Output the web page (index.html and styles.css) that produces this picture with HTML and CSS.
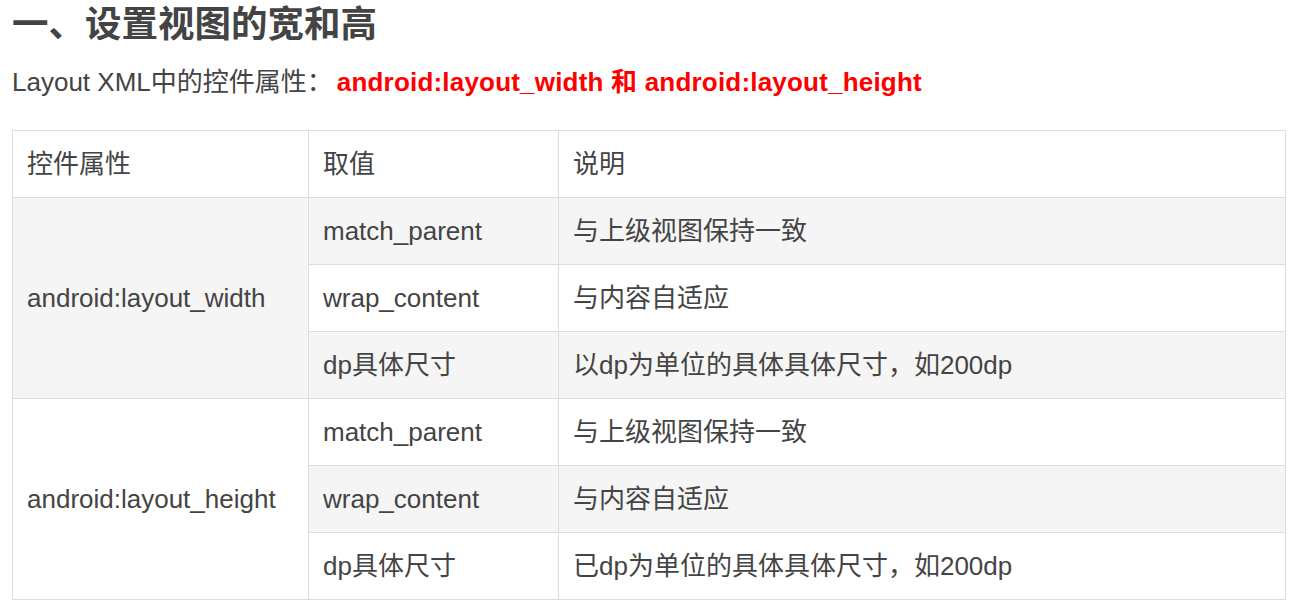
FILE: index.html
```html
<!DOCTYPE html>
<html lang="zh-CN">
<head>
<meta charset="utf-8">
<title>设置视图的宽和高</title>
<link rel="stylesheet" href="styles.css">
</head>
<body>
<div class="article">
  <h2 class="title">一、设置视图的宽和高</h2>
  <p class="intro">Layout XML中的控件属性：<strong class="hl">android:layout_width 和 android:layout_height</strong></p>
  <table class="attr-table">
    <colgroup>
      <col class="c1"><col class="c2"><col class="c3">
    </colgroup>
    <thead>
      <tr><th>控件属性</th><th>取值</th><th>说明</th></tr>
    </thead>
    <tbody>
      <tr><td rowspan="3">android:layout_width</td><td>match_parent</td><td>与上级视图保持一致</td></tr>
      <tr><td>wrap_content</td><td>与内容自适应</td></tr>
      <tr><td>dp具体尺寸</td><td>以dp为单位的具体具体尺寸，如200dp</td></tr>
      <tr><td rowspan="3">android:layout_height</td><td>match_parent</td><td>与上级视图保持一致</td></tr>
      <tr><td>wrap_content</td><td>与内容自适应</td></tr>
      <tr><td>dp具体尺寸</td><td>已dp为单位的具体具体尺寸，如200dp</td></tr>
    </tbody>
  </table>
</div>
</body>
</html>
```

FILE: styles.css
```css
html, body {
  margin: 0;
  padding: 0;
  background: #fff;
}
body {
  font-family: "Liberation Sans", Arial, "Noto Sans CJK SC", sans-serif;
  color: #444;
}
.article {
  padding: 0 8px 0 12px;
}
.title {
  margin: 0;
  font-size: 36.5px;
  line-height: 50px;
  font-weight: bold;
  color: #444;
}
.intro {
  margin: 13px 0 0;
  font-size: 26px;
  line-height: 39px;
}
.hl {
  margin-left: 4px;
  color: #f00;
  font-weight: bold;
  letter-spacing: 0.2px;
}
.attr-table {
  margin-top: 28px;
  width: 100%;
  border-collapse: collapse;
  table-layout: fixed;
  font-size: 26px;
  line-height: 38px;
}
.c1 { width: 296px; }
.c2 { width: 250px; }
.attr-table th,
.attr-table td {
  border: 1px solid #ddd;
  padding: 14px 14px;
  text-align: left;
  font-weight: normal;
  vertical-align: middle;
  white-space: nowrap;
}
.attr-table tbody tr:nth-child(odd) {
  background: #f5f5f5;
}
```
